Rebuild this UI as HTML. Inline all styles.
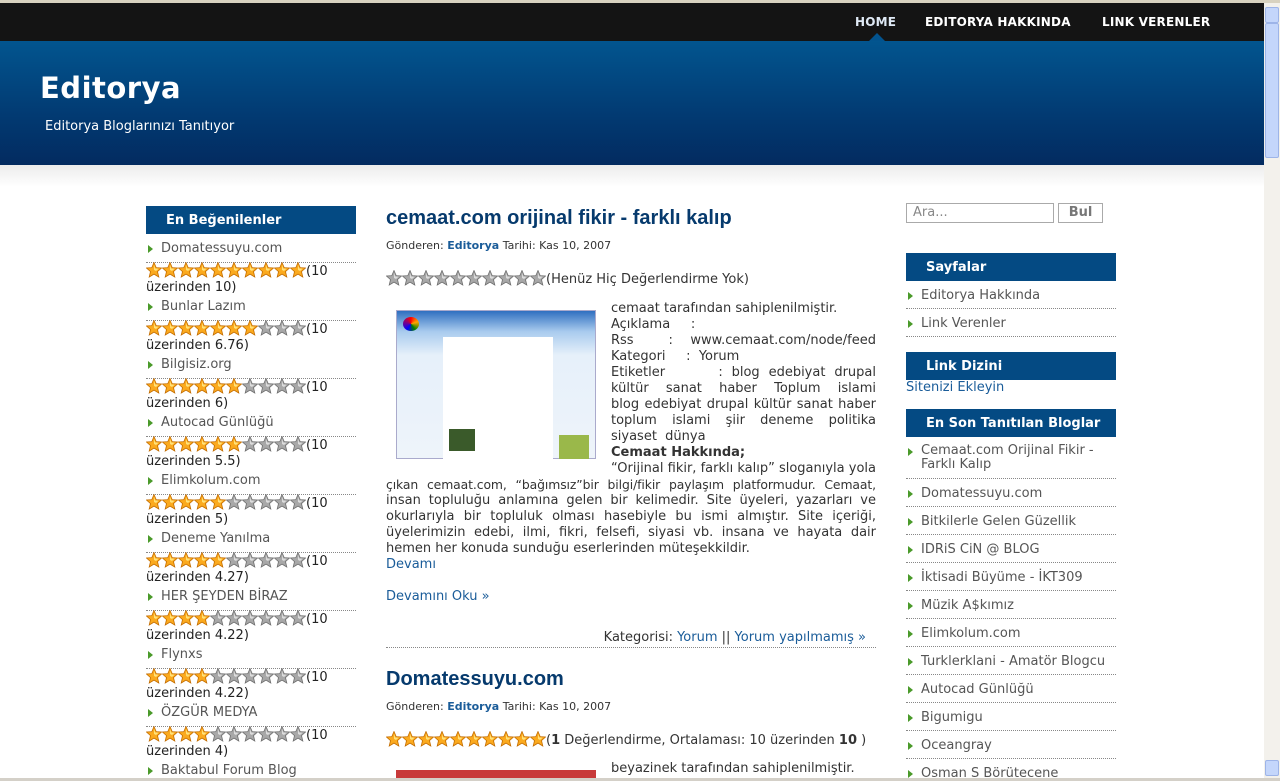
<!DOCTYPE html>
<html><head><meta charset="utf-8">
<style>
*{margin:0;padding:0;box-sizing:border-box}
body{width:1280px;height:781px;overflow:hidden;background:#fff;font-family:"DejaVu Sans",Verdana,sans-serif;font-size:13px;color:#333;position:relative}
a{text-decoration:none;color:#1a5c99}
#topline{position:absolute;left:0;top:0;width:1280px;height:3px;background:#d8d2c0}
#nav{position:absolute;left:0;top:3px;width:1264px;height:38px;background:#141414}
#nav span{position:absolute;top:12px;color:#fff;font-weight:bold;font-size:12px;letter-spacing:.2px}
#tri{position:absolute;left:869px;top:33px;width:0;height:0;border-left:8px solid transparent;border-right:8px solid transparent;border-bottom:8px solid #02538e}
#head{position:absolute;left:0;top:41px;width:1264px;height:124px;background:linear-gradient(#02558f,#023a72 60%,#032b60)}
#head h1{position:absolute;left:40px;top:30px;color:#fff;font-size:29px;font-weight:bold;font-family:"DejaVu Sans",sans-serif;letter-spacing:.5px}
#head p{position:absolute;left:45px;top:78px;color:#fff;font-size:13px}
#fade{position:absolute;left:0;top:165px;width:1264px;height:22px;background:linear-gradient(#ececec,#fff)}
#scroll{position:absolute;left:1264px;top:3px;width:16px;height:775px;background:#f3f1ec}
#scroll .b{position:absolute;left:1px;width:14px;background:#c4d6fb;border:1px solid #9db4e8;border-radius:2px}
#status{position:absolute;left:0;top:778px;width:1280px;height:3px;background:#d4d0c8}
.box{position:absolute;width:210px;height:28px;background:#044a83;color:#fff;font-weight:bold;font-size:13px;padding:7px 0 0 20px}
.li{position:absolute;color:#555;font-size:13px;padding-left:15px;width:210px}
.li:before{content:"";position:absolute;left:2px;top:4px;border-left:5px solid #4a9a2a;border-top:4px solid transparent;border-bottom:4px solid transparent}
.dot{position:absolute;width:210px;border-top:1px dotted #888}
.rate{position:absolute;font-size:13px;line-height:16px;width:210px;color:#222}
svg.s{width:16px;height:16px;vertical-align:-3px}
.title{position:absolute;left:386px;color:#063a6d;font-weight:bold;font-size:20px;font-family:"Liberation Sans",sans-serif;line-height:24px}
.meta{position:absolute;left:386px;font-size:11px;color:#333}
.meta b{color:#1a5c99}
.body{position:absolute;left:386px;width:490px;font-size:13px;line-height:16px}
.j{text-align:justify;text-align-last:justify;white-space:pre-wrap}
</style></head><body>
<svg width="0" height="0" style="position:absolute"><defs>
<symbol id="sg" viewBox="0 0 16 16"><polygon points="8,0.5 10.2,5.6 15.6,6 11.5,9.6 12.8,15 8,12.1 3.2,15 4.5,9.6 0.4,6 5.8,5.6" fill="#fbaa1e" stroke="#c46d00" stroke-width="0.8"/><polygon points="8,3 9.3,6.5 12.6,6.8 10,9 8,8" fill="#ffe27a"/></symbol>
<symbol id="sx" viewBox="0 0 16 16"><polygon points="8,0.5 10.2,5.6 15.6,6 11.5,9.6 12.8,15 8,12.1 3.2,15 4.5,9.6 0.4,6 5.8,5.6" fill="#a8a8a8" stroke="#6f6f6f" stroke-width="0.8"/><polygon points="8,3 9.3,6.5 12.6,6.8 10,9 8,8" fill="#dcdcdc"/></symbol>
</defs></svg>
<div id="topline"></div>
<div id="nav"><span style="left:855px;color:#dfe9f5">HOME</span><span style="left:925px">EDITORYA HAKKINDA</span><span style="left:1102px">LINK VERENLER</span></div>
<div id="head"><h1>Editorya</h1><p>Editorya Bloglarınızı Tanıtıyor</p></div>
<div id="tri"></div>
<div id="fade"></div>

<!-- left -->
<div class="box" style="left:146px;top:206px">En Beğenilenler</div>
<div class="li" style="left:146px;top:241px">Domatessuyu.com</div><div class="dot" style="left:146px;top:262px"></div>
<div class="rate" style="left:146px;top:262px"><svg class="s"><use href="#sg"/></svg><svg class="s"><use href="#sg"/></svg><svg class="s"><use href="#sg"/></svg><svg class="s"><use href="#sg"/></svg><svg class="s"><use href="#sg"/></svg><svg class="s"><use href="#sg"/></svg><svg class="s"><use href="#sg"/></svg><svg class="s"><use href="#sg"/></svg><svg class="s"><use href="#sg"/></svg><svg class="s"><use href="#sg"/></svg>(10 üzerinden 10)</div>
<div class="li" style="left:146px;top:299px">Bunlar Lazım</div><div class="dot" style="left:146px;top:320px"></div>
<div class="rate" style="left:146px;top:320px"><svg class="s"><use href="#sg"/></svg><svg class="s"><use href="#sg"/></svg><svg class="s"><use href="#sg"/></svg><svg class="s"><use href="#sg"/></svg><svg class="s"><use href="#sg"/></svg><svg class="s"><use href="#sg"/></svg><svg class="s"><use href="#sg"/></svg><svg class="s"><use href="#sx"/></svg><svg class="s"><use href="#sx"/></svg><svg class="s"><use href="#sx"/></svg>(10 üzerinden 6.76)</div>
<div class="li" style="left:146px;top:357px">Bilgisiz.org</div><div class="dot" style="left:146px;top:378px"></div>
<div class="rate" style="left:146px;top:378px"><svg class="s"><use href="#sg"/></svg><svg class="s"><use href="#sg"/></svg><svg class="s"><use href="#sg"/></svg><svg class="s"><use href="#sg"/></svg><svg class="s"><use href="#sg"/></svg><svg class="s"><use href="#sg"/></svg><svg class="s"><use href="#sx"/></svg><svg class="s"><use href="#sx"/></svg><svg class="s"><use href="#sx"/></svg><svg class="s"><use href="#sx"/></svg>(10 üzerinden 6)</div>
<div class="li" style="left:146px;top:415px">Autocad Günlüğü</div><div class="dot" style="left:146px;top:436px"></div>
<div class="rate" style="left:146px;top:436px"><svg class="s"><use href="#sg"/></svg><svg class="s"><use href="#sg"/></svg><svg class="s"><use href="#sg"/></svg><svg class="s"><use href="#sg"/></svg><svg class="s"><use href="#sg"/></svg><svg class="s"><use href="#sg"/></svg><svg class="s"><use href="#sx"/></svg><svg class="s"><use href="#sx"/></svg><svg class="s"><use href="#sx"/></svg><svg class="s"><use href="#sx"/></svg>(10 üzerinden 5.5)</div>
<div class="li" style="left:146px;top:473px">Elimkolum.com</div><div class="dot" style="left:146px;top:494px"></div>
<div class="rate" style="left:146px;top:494px"><svg class="s"><use href="#sg"/></svg><svg class="s"><use href="#sg"/></svg><svg class="s"><use href="#sg"/></svg><svg class="s"><use href="#sg"/></svg><svg class="s"><use href="#sg"/></svg><svg class="s"><use href="#sx"/></svg><svg class="s"><use href="#sx"/></svg><svg class="s"><use href="#sx"/></svg><svg class="s"><use href="#sx"/></svg><svg class="s"><use href="#sx"/></svg>(10 üzerinden 5)</div>
<div class="li" style="left:146px;top:531px">Deneme Yanılma</div><div class="dot" style="left:146px;top:552px"></div>
<div class="rate" style="left:146px;top:552px"><svg class="s"><use href="#sg"/></svg><svg class="s"><use href="#sg"/></svg><svg class="s"><use href="#sg"/></svg><svg class="s"><use href="#sg"/></svg><svg class="s"><use href="#sg"/></svg><svg class="s"><use href="#sx"/></svg><svg class="s"><use href="#sx"/></svg><svg class="s"><use href="#sx"/></svg><svg class="s"><use href="#sx"/></svg><svg class="s"><use href="#sx"/></svg>(10 üzerinden 4.27)</div>
<div class="li" style="left:146px;top:589px">HER ŞEYDEN BİRAZ</div><div class="dot" style="left:146px;top:610px"></div>
<div class="rate" style="left:146px;top:610px"><svg class="s"><use href="#sg"/></svg><svg class="s"><use href="#sg"/></svg><svg class="s"><use href="#sg"/></svg><svg class="s"><use href="#sg"/></svg><svg class="s"><use href="#sx"/></svg><svg class="s"><use href="#sx"/></svg><svg class="s"><use href="#sx"/></svg><svg class="s"><use href="#sx"/></svg><svg class="s"><use href="#sx"/></svg><svg class="s"><use href="#sx"/></svg>(10 üzerinden 4.22)</div>
<div class="li" style="left:146px;top:647px">Flynxs</div><div class="dot" style="left:146px;top:668px"></div>
<div class="rate" style="left:146px;top:668px"><svg class="s"><use href="#sg"/></svg><svg class="s"><use href="#sg"/></svg><svg class="s"><use href="#sg"/></svg><svg class="s"><use href="#sg"/></svg><svg class="s"><use href="#sx"/></svg><svg class="s"><use href="#sx"/></svg><svg class="s"><use href="#sx"/></svg><svg class="s"><use href="#sx"/></svg><svg class="s"><use href="#sx"/></svg><svg class="s"><use href="#sx"/></svg>(10 üzerinden 4.22)</div>
<div class="li" style="left:146px;top:705px">ÖZGÜR MEDYA</div><div class="dot" style="left:146px;top:726px"></div>
<div class="rate" style="left:146px;top:726px"><svg class="s"><use href="#sg"/></svg><svg class="s"><use href="#sg"/></svg><svg class="s"><use href="#sg"/></svg><svg class="s"><use href="#sg"/></svg><svg class="s"><use href="#sx"/></svg><svg class="s"><use href="#sx"/></svg><svg class="s"><use href="#sx"/></svg><svg class="s"><use href="#sx"/></svg><svg class="s"><use href="#sx"/></svg><svg class="s"><use href="#sx"/></svg>(10 üzerinden 4)</div>
<div class="li" style="left:146px;top:763px">Baktabul Forum Blog</div>

<!-- main -->
<div class="title" style="top:206px">cemaat.com orijinal fikir - farklı kalıp</div>
<div class="meta" style="top:239px">Gönderen: <b>Editorya</b> Tarihi: Kas 10, 2007</div>
<div class="body" style="top:270px"><svg class="s"><use href="#sx"/></svg><svg class="s"><use href="#sx"/></svg><svg class="s"><use href="#sx"/></svg><svg class="s"><use href="#sx"/></svg><svg class="s"><use href="#sx"/></svg><svg class="s"><use href="#sx"/></svg><svg class="s"><use href="#sx"/></svg><svg class="s"><use href="#sx"/></svg><svg class="s"><use href="#sx"/></svg><svg class="s"><use href="#sx"/></svg>(Henüz Hiç Değerlendirme Yok)</div>
<div style="position:absolute;left:396px;top:310px;width:200px;height:149px;background:linear-gradient(#2f6fc0,#a9cbee 14%,#e6f0fa 30%,#eef4fa);border:1px solid #aac">
 <div style="position:absolute;left:46px;top:26px;width:110px;height:122px;background:#fff"></div>
 <div style="position:absolute;left:52px;top:118px;width:26px;height:22px;background:#3a5a2a"></div>
 <div style="position:absolute;left:162px;top:124px;width:30px;height:24px;background:#9ab84a"></div>
 <div style="position:absolute;left:6px;top:6px;width:16px;height:14px;border-radius:50%;background:conic-gradient(red,orange,green,blue,purple,red)"></div>
</div>
<div class="body" style="top:301px">
<div style="margin-left:225px;width:265px">
<div>cemaat tarafından sahiplenilmiştir.</div>
<div>Açıklama&nbsp;&nbsp;&nbsp;&nbsp;&nbsp;:</div>
<div class="j">Rss    :  www.cemaat.com/node/feed</div>
<div>Kategori&nbsp;&nbsp;&nbsp;&nbsp;&nbsp;:&nbsp;&nbsp;Yorum</div>
<div class="j">Etiketler      : blog edebiyat drupal</div>
<div class="j">kültür sanat haber Toplum islami</div>
<div class="j">blog edebiyat drupal kültür sanat haber</div>
<div class="j">toplum islami şiir deneme politika</div>
<div>siyaset&nbsp;&nbsp;dünya</div>
<div><b>Cemaat Hakkında;</b></div>
<div class="j">“Orijinal fikir, farklı kalıp” sloganıyla yola</div>
</div>
<div class="j" style="font-size:12.4px;letter-spacing:-0.1px">çıkan cemaat.com, “bağımsız”bir bilgi/fikir paylaşım platformudur. Cemaat,</div>
<div class="j">insan topluluğu anlamına gelen bir kelimedir. Site üyeleri, yazarları ve</div>
<div class="j">okurlarıyla bir topluluk olması hasebiyle bu ismi almıştır. Site içeriği,</div>
<div class="j">üyelerimizin edebi, ilmi, fikri, felsefi, siyasi vb. insana ve hayata dair</div>
<div>hemen her konuda sunduğu eserlerinden müteşekkildir.</div>
<a>Devamı</a><br><br><a>Devamını Oku »</a>
</div>
<div class="body" style="top:630px;text-align:right;padding-right:10px">Kategorisi: <a>Yorum</a> || <a>Yorum yapılmamış »</a></div>
<div class="dot" style="left:386px;top:647px;width:490px"></div>
<div class="title" style="top:667px">Domatessuyu.com</div>
<div class="meta" style="top:700px">Gönderen: <b>Editorya</b> Tarihi: Kas 10, 2007</div>
<div class="body" style="top:731px"><svg class="s"><use href="#sg"/></svg><svg class="s"><use href="#sg"/></svg><svg class="s"><use href="#sg"/></svg><svg class="s"><use href="#sg"/></svg><svg class="s"><use href="#sg"/></svg><svg class="s"><use href="#sg"/></svg><svg class="s"><use href="#sg"/></svg><svg class="s"><use href="#sg"/></svg><svg class="s"><use href="#sg"/></svg><svg class="s"><use href="#sg"/></svg>(<b>1</b> Değerlendirme, Ortalaması: 10 üzerinden <b>10</b> )</div>
<div style="position:absolute;left:396px;top:770px;width:200px;height:8px;background:#c83a3a"></div>
<div class="body" style="top:761px;left:611px">beyazinek tarafından sahiplenilmiştir.</div>

<!-- right -->
<div style="position:absolute;left:906px;top:203px;width:148px;height:20px;border:1px solid #aaa;color:#888;font-size:13px;padding:1px 0 0 6px">Ara...</div>
<div style="position:absolute;left:1058px;top:203px;width:45px;height:20px;border:1px solid #aaa;color:#777;font-weight:bold;font-size:13px;text-align:center;padding-top:1px">Bul</div>
<div class="box" style="left:906px;top:253px">Sayfalar</div>
<div class="li" style="left:906px;top:288px">Editorya Hakkında</div><div class="dot" style="left:906px;top:308px"></div>
<div class="li" style="left:906px;top:316px">Link Verenler</div><div class="dot" style="left:906px;top:336px"></div>
<div class="box" style="left:906px;top:352px">Link Dizini</div>
<div style="position:absolute;left:906px;top:380px;color:#1a5c99">Sitenizi Ekleyin</div>
<div class="box" style="left:906px;top:409px">En Son Tanıtılan Bloglar</div>
<div class="li" style="left:906px;top:444px;line-height:14px">Cemaat.com Orijinal Fikir - Farklı Kalıp</div><div class="dot" style="left:906px;top:478px"></div>
<div class="li" style="left:906px;top:486px">Domatessuyu.com</div><div class="dot" style="left:906px;top:506px"></div>
<div class="li" style="left:906px;top:514px">Bitkilerle Gelen Güzellik</div><div class="dot" style="left:906px;top:534px"></div>
<div class="li" style="left:906px;top:542px">IDRiS CiN @ BLOG</div><div class="dot" style="left:906px;top:562px"></div>
<div class="li" style="left:906px;top:570px">İktisadi Büyüme - İKT309</div><div class="dot" style="left:906px;top:590px"></div>
<div class="li" style="left:906px;top:598px">Müzik A$kımız</div><div class="dot" style="left:906px;top:618px"></div>
<div class="li" style="left:906px;top:626px">Elimkolum.com</div><div class="dot" style="left:906px;top:646px"></div>
<div class="li" style="left:906px;top:654px">Turklerklani - Amatör Blogcu</div><div class="dot" style="left:906px;top:674px"></div>
<div class="li" style="left:906px;top:682px">Autocad Günlüğü</div><div class="dot" style="left:906px;top:702px"></div>
<div class="li" style="left:906px;top:710px">Bigumigu</div><div class="dot" style="left:906px;top:730px"></div>
<div class="li" style="left:906px;top:738px">Oceangray</div><div class="dot" style="left:906px;top:758px"></div>
<div class="li" style="left:906px;top:766px">Osman S Börütecene</div>

<div id="scroll"><div class="b" style="top:4px;height:16px"></div><div class="b" style="top:20px;height:135px"></div><div class="b" style="top:757px;height:16px"></div></div>
<div id="status"></div>
</body></html>
